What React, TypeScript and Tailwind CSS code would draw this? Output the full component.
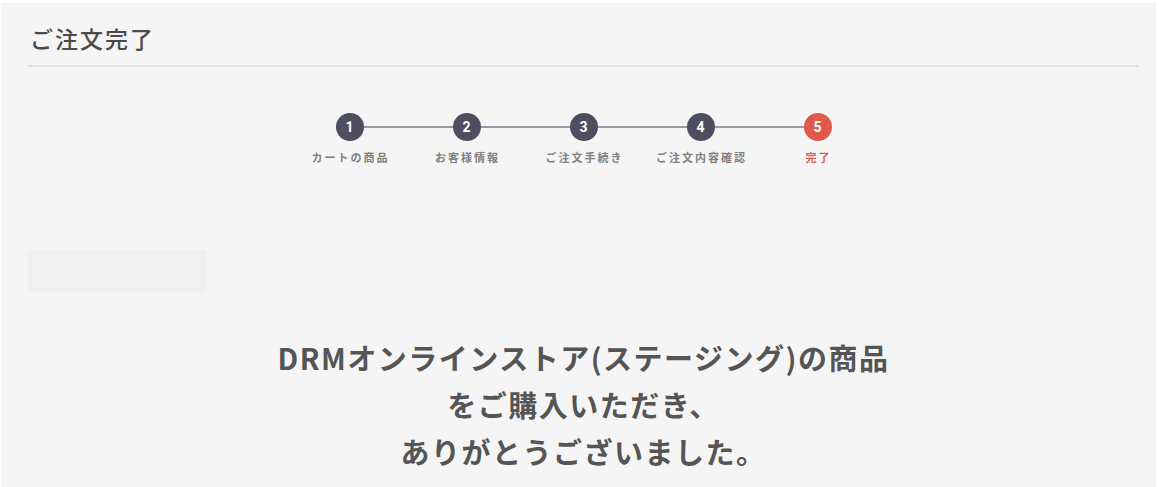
const steps = [
  { n: 1, label: "カートの商品" },
  { n: 2, label: "お客様情報" },
  { n: 3, label: "ご注文手続き" },
  { n: 4, label: "ご注文内容確認" },
  { n: 5, label: "完了" },
];

function Stepper() {
  return (
    <div className="relative mx-auto grid w-[585px] grid-cols-5">
      <div className="absolute left-[58px] right-[58px] top-[13px] h-[2px] bg-[#9a99a6]" />
      {steps.map((s) => {
        const last = s.n === steps.length;
        return (
          <div key={s.n} className="relative flex flex-col items-center">
            <div
              className={
                last
                  ? "flex h-[28px] w-[28px] items-center justify-center rounded-full bg-[#e05a4c] text-[14px] font-bold text-white"
                  : "flex h-[28px] w-[28px] items-center justify-center rounded-full bg-[#4f4e60] text-[14px] font-bold text-white"
              }
              style={{ fontFamily: "Roboto, 'Noto Sans', sans-serif" }}
            >
              {s.n}
            </div>
            <div
              className={
                last
                  ? "mt-[9px] pl-[2px] text-[11px] font-bold leading-[14px] tracking-[2px] text-[#e05a4c]"
                  : "mt-[9px] pl-[2px] text-[11px] font-bold leading-[14px] tracking-[2px] text-[#808080]"
              }
            >
              {s.label}
            </div>
          </div>
        );
      })}
    </div>
  );
}

export default function App() {
  return (
    <div
      className="h-[487px] w-full bg-white pl-[1px] pr-[3px] pt-[3px]"
      style={{ fontFamily: "'Noto Sans CJK JP', 'Noto Sans', sans-serif" }}
    >
      <div className="h-full bg-[#f5f5f5] pl-[27px] pr-[17px]">
        <div className="border-b-2 border-[#e0e0e0] pb-[11px] pt-[19px]">
          <h1 className="pl-[2px] text-[23px] font-medium leading-[32px] tracking-[2px] text-[#4a4a4a]">ご注文完了</h1>
        </div>
        <div className="pt-[46px]">
          <Stepper />
        </div>
        <div className="mt-[86px] h-[42px] w-[178px] bg-[#f0f0f0]" />
        <div className="pt-[42px] text-center text-[29px] font-bold leading-[47px] tracking-[1.5px] text-[#555555]">
          <p>DRMオンラインストア(ステージング)の商品</p>
          <p>をご購入いただき、</p>
          <p>ありがとうございました。</p>
        </div>
      </div>
    </div>
  );
}
